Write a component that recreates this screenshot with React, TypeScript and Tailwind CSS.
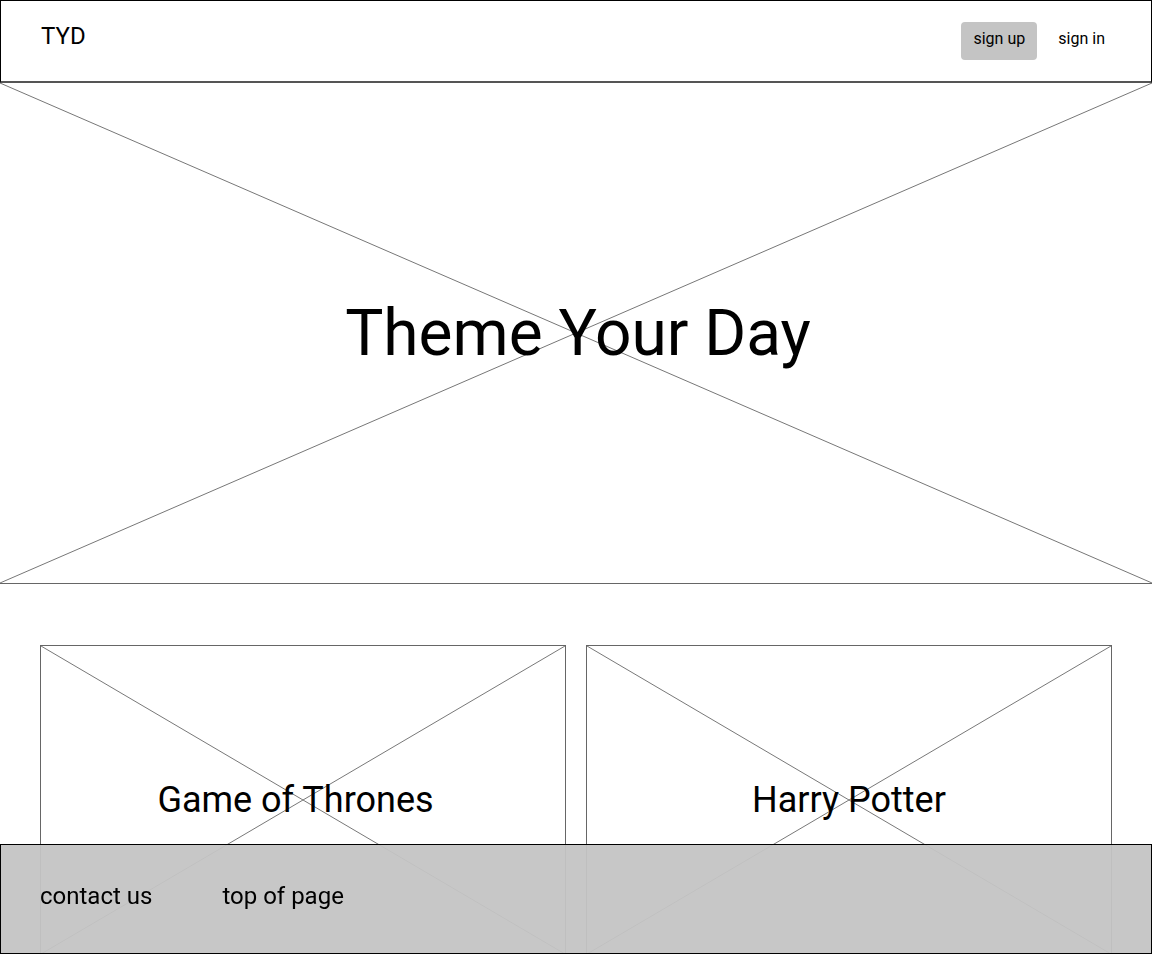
const Cross = () => (
  <svg
    className="absolute inset-0 h-full w-full"
    viewBox="0 0 100 100"
    preserveAspectRatio="none"
  >
    <line x1="0" y1="0" x2="100" y2="100" stroke="#777" strokeWidth="1" vectorEffect="non-scaling-stroke" />
    <line x1="0" y1="100" x2="100" y2="0" stroke="#777" strokeWidth="1" vectorEffect="non-scaling-stroke" />
  </svg>
)

const ThemeCard = ({ title, shift }: { title: string; shift?: boolean }) => (
  <div className="relative flex h-[310px] items-center justify-center border border-[#666]">
    <Cross />
    <h2 className={shift ? "relative pr-[15px] text-[36px] leading-none" : "relative text-[36px] leading-none"}>
      {title}
    </h2>
  </div>
)

export default function App() {
  return (
    <div className="min-h-[954px] bg-white font-['Roboto',sans-serif] text-black">
      <header className="box-border flex h-[83px] items-start justify-between border border-black border-b-2 border-b-[#555] pl-10 pr-[46px]">
        <div className="mt-[23px] text-2xl leading-none">TYD</div>
        <nav className="mt-[21px] flex items-center gap-[21px]">
          <button className="h-[38px] w-[76px] rounded bg-[#c4c4c4] pb-[4px] text-base">sign up</button>
          <button className="pb-[4px] text-base">sign in</button>
        </nav>
      </header>

      <section className="relative flex h-[501px] items-center justify-center border-b border-[#666]">
        <Cross />
        <h1 className="relative ml-[4px] mt-[2px] text-[64px] leading-none">Theme Your Day</h1>
      </section>

      <section className="mt-[61px] grid grid-cols-2 gap-5 px-10">
        <ThemeCard title="Game of Thrones" shift />
        <ThemeCard title="Harry Potter" />
      </section>

      <footer className="fixed inset-x-0 bottom-0 box-border flex h-[110px] items-center gap-[70px] border border-black bg-[#c4c4c4]/95 pb-[6px] pl-[39px]">
        <a className="text-2xl" href="#">contact us</a>
        <a className="text-2xl" href="#">top of page</a>
      </footer>
    </div>
  )
}
